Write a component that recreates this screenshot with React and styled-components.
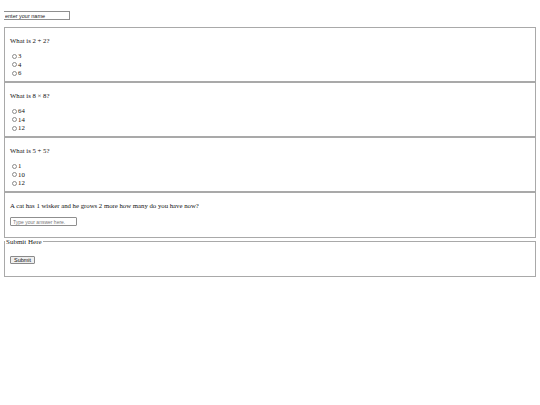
import React from "react";
import styled, { createGlobalStyle } from "styled-components";

const Global = createGlobalStyle`
  html, body { background: #fff; }
  body {
    margin: 4px;
    font-family: "Liberation Serif", "Times New Roman", serif;
    font-size: 6.75px;
    color: #111;
  }
`;

const NameInput = styled.input`
  display: block;
  box-sizing: border-box;
  margin: 7px 0 0 -1px;
  width: 67px;
  height: 9px;
  padding: 0 1px;
  border: 1px solid #8f8f8f;
  font-family: "Liberation Sans", Arial, sans-serif;
  font-size: 5.5px;
  color: #222;
  outline: none;
`;

const Form = styled.form`
  margin-top: 7px;
  display: flex;
  flex-direction: column;
`;

const Field = styled.fieldset`
  margin: 0;
  min-width: 0;
  box-sizing: border-box;
  border: 1px solid #a9a9a9;
  padding: ${(p) => p.$pad || "2px 5px 3.5px"};
`;

const Legend = styled.legend`
  padding: 0 1px;
  margin-left: -5px;
  font-size: 7px;
  line-height: 8px;
  color: #222;
`;

const Question = styled.p`
  margin: 7px 0;
  line-height: 8px;
`;

const Options = styled.div`
  display: flex;
  flex-direction: column;
`;

const Option = styled.label`
  display: flex;
  align-items: center;
  height: 8.5px;
  line-height: 8.5px;
`;

const Radio = styled.input`
  appearance: none;
  box-sizing: border-box;
  width: 5px;
  height: 5px;
  margin: 0 1px 0 2px;
  border: 1px solid #8c8c8c;
  border-radius: 50%;
  background: #fff;
`;

const AnswerInput = styled.input`
  display: block;
  box-sizing: border-box;
  width: 67px;
  height: 9px;
  margin: 0 0 7px;
  padding: 0 2px;
  border: 1px solid #8f8f8f;
  border-radius: 1px;
  font-family: "Liberation Sans", Arial, sans-serif;
  font-size: 5px;
  outline: none;
  &::placeholder { color: #777; }
`;

const SubmitButton = styled.button`
  display: block;
  box-sizing: border-box;
  height: 8px;
  margin: 10px 0 12px;
  padding: 0 3px;
  border: 1px solid #8a8a8a;
  border-radius: 1px;
  background: #efefef;
  font-family: "Liberation Sans", Arial, sans-serif;
  font-size: 5.5px;
  line-height: 6px;
  color: #111;
`;

const questions = [
  { q: "What is 2 + 2?", name: "q1", opts: ["3", "4", "6"] },
  { q: "What is 8 × 8?", name: "q2", opts: ["64", "14", "12"] },
  { q: "What is 5 + 5?", name: "q3", opts: ["1", "10", "12"] },
];

export default function App() {
  return (
    <>
      <Global />
      <NameInput defaultValue="enter your name" />
      <Form onSubmit={(e) => e.preventDefault()}>
        {questions.map((item) => (
          <Field key={item.name}>
            <Question>{item.q}</Question>
            <Options>
              {item.opts.map((o) => (
                <Option key={o}>
                  <Radio type="radio" name={item.name} value={o} />
                  {o}
                </Option>
              ))}
            </Options>
          </Field>
        ))}
        <Field>
          <Question>A cat has 1 wisker and he grows 2 more how many do you have now?</Question>
          <AnswerInput placeholder="Type your answer here." />
        </Field>
        <Field $pad="0 5px">
          <Legend>Submit Here</Legend>
          <SubmitButton type="submit">Submit</SubmitButton>
        </Field>
      </Form>
    </>
  );
}
